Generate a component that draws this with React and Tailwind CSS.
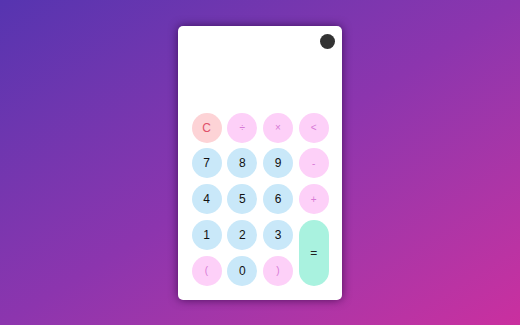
const keys = [
    { label: 'C', kind: 'clear' },
    { label: '÷', kind: 'op' },
    { label: '×', kind: 'op' },
    { label: '<', kind: 'op' },
    { label: '7', kind: 'num' },
    { label: '8', kind: 'num' },
    { label: '9', kind: 'num' },
    { label: '-', kind: 'op' },
    { label: '4', kind: 'num' },
    { label: '5', kind: 'num' },
    { label: '6', kind: 'num' },
    { label: '+', kind: 'op' },
    { label: '1', kind: 'num' },
    { label: '2', kind: 'num' },
    { label: '3', kind: 'num' },
    { label: '=', kind: 'eq' },
    { label: '(', kind: 'op' },
    { label: '0', kind: 'num' },
    { label: ')', kind: 'op' },
];

const styles = {
    clear: 'bg-[#fdd3d6] text-[#e0506a] text-[12px]',
    op: 'bg-[#fdd0f8] text-[#d77bd6] text-[10px]',
    num: 'bg-[#c9e8f9] text-[#111] text-[12px]',
    eq: 'bg-[#a9f2df] text-[#222] text-[12px] row-span-2 h-full',
};

const App = () => {
    return (
        <div className="w-[520px] h-[325px] flex items-center justify-center bg-linear-to-br from-[#5634b0] via-[#8c35ae] to-[#ca2f9f] font-['Liberation_Sans',Arial,sans-serif]">
            <div className="w-[164px] h-[274px] bg-white rounded-[5px] shadow-[0_0_10px_rgba(40,0,60,0.7)] flex flex-col px-[13.5px] pb-[14px]">
                {/* Display */}
                <div className="h-[88px] flex justify-end pt-[8px]">
                    <div className="w-[15px] h-[15px] rounded-full bg-[#333] mr-[-6px]"></div>
                </div>

                {/* Keypad */}
                <div className="grid grid-cols-4 gap-x-[6px] gap-y-[5.7px]">
                    {keys.map((k) => (
                        <button
                            key={k.label}
                            className={`w-[30px] ${k.kind === 'eq' ? '' : 'h-[30px]'} rounded-full flex items-center justify-center font-medium ${styles[k.kind]}`}
                        >
                            {k.label}
                        </button>
                    ))}
                </div>
            </div>
        </div>
    );
};

export default App;
